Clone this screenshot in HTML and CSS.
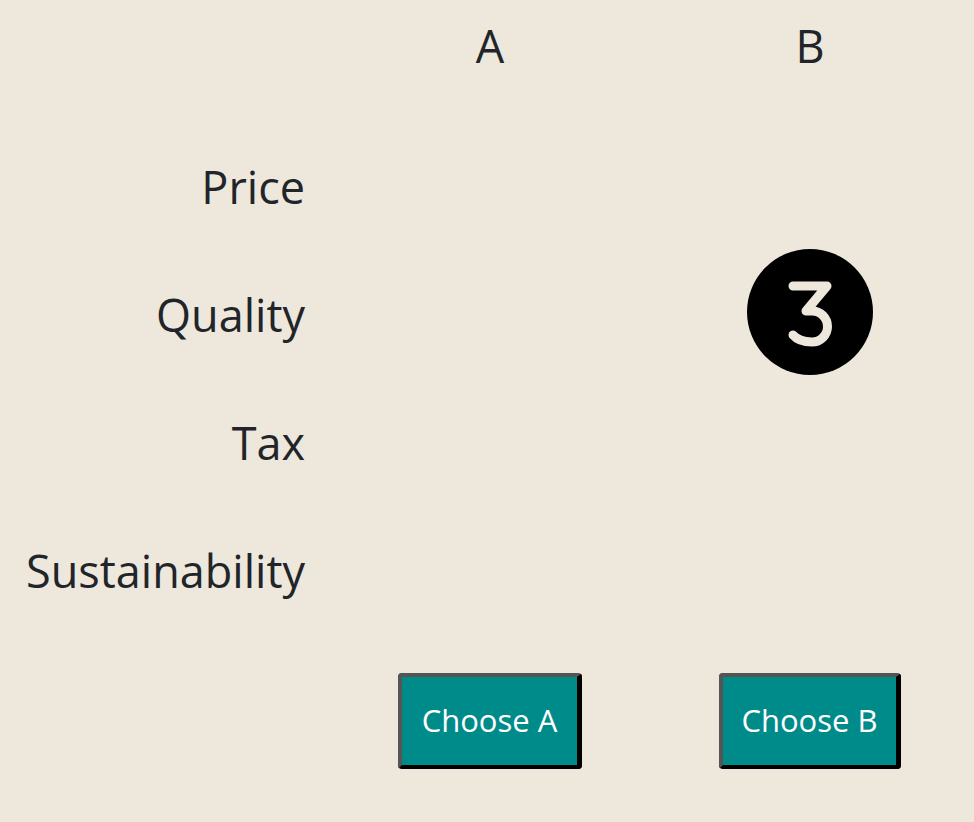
FILE: index.html
```html
<!DOCTYPE html>
<html lang="en">
<head>
<meta charset="utf-8">
<title>Choice</title>
<link rel="stylesheet" href="styles.css">
</head>
<body>
<main class="table">
  <div class="row head">
    <div class="label"></div>
    <div class="cell">A</div>
    <div class="cell">B</div>
  </div>
  <div class="row">
    <div class="label">Price</div>
    <div class="cell"></div>
    <div class="cell"></div>
  </div>
  <div class="row">
    <div class="label">Quality</div>
    <div class="cell"></div>
    <div class="cell">
      <svg class="badge" width="126" height="126" viewBox="0 0 126 126" aria-label="3">
        <circle cx="63" cy="63" r="63" fill="#000"/>
        <path d="M46 37 H80 L59 62 H65 A15.5 15.5 0 0 1 65 93 Q52 93 46 86" fill="none" stroke="#ede7dc" stroke-width="9" stroke-linecap="round" stroke-linejoin="round"/>
      </svg>
    </div>
  </div>
  <div class="row">
    <div class="label">Tax</div>
    <div class="cell"></div>
    <div class="cell"></div>
  </div>
  <div class="row">
    <div class="label">Sustainability</div>
    <div class="cell"></div>
    <div class="cell"></div>
  </div>
  <div class="row actions">
    <div class="label"></div>
    <div class="cell"><button class="btn">Choose A</button></div>
    <div class="cell"><button class="btn btn-b">Choose B</button></div>
  </div>
</main>
</body>
</html>
```
FILE: styles.css
```css
html, body {
  margin: 0;
  padding: 0;
  background: #ede7dc;
}
body {
  font-family: "Open Sans", "Noto Sans", sans-serif;
  color: #212529;
}
.table {
  display: flex;
  flex-direction: column;
}
.row {
  display: grid;
  grid-template-columns: 330px 320px 320px;
  height: 128px;
  align-items: center;
  font-size: 45px;
  line-height: 1.2;
}
.row.head {
  height: 92px;
  margin-bottom: 31px;
}
.label {
  text-align: right;
  padding-right: 25px;
}
.cell {
  display: flex;
  justify-content: center;
  align-items: center;
}
.badge {
  display: block;
  margin-top: -6px;
}
.row.actions {
  height: auto;
  padding-top: 38px;
}
.btn {
  font-family: "Open Sans", "Noto Sans", sans-serif;
  font-size: 31px;
  line-height: 45px;
  color: #fff;
  background: #008b8b;
  padding: 21px 20px 22px;
  border-style: solid;
  border-width: 4px 5px 4px 4px;
  border-color: #555 #000 #000 #555;
  border-radius: 4px;
  cursor: pointer;
}
.btn-b {
  padding-left: 18px;
  padding-right: 18px;
}
```
